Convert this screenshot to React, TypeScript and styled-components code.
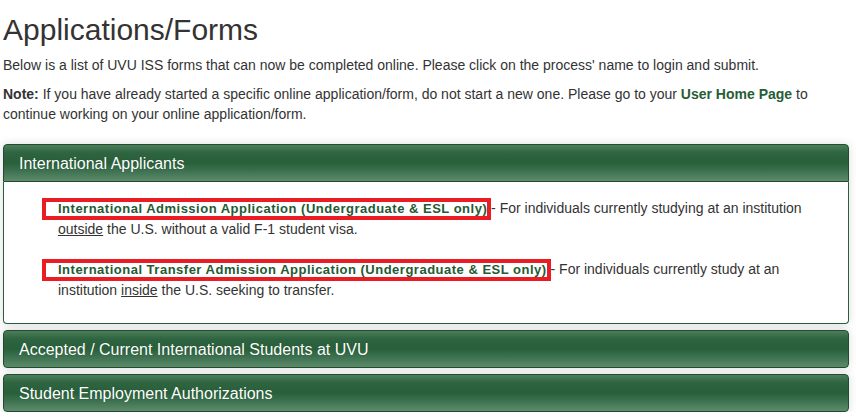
import styled, { createGlobalStyle } from "styled-components";

const GlobalStyle = createGlobalStyle`
  body {
    margin: 0;
    background: #fff;
    font-family: "Liberation Sans", Arial, sans-serif;
    color: #333;
  }
`;

const Page = styled.div`
  padding: 0 7px 0 3px;
`;

const Title = styled.h1`
  margin: 12px 0 0;
  font-size: 30px;
  font-weight: normal;
  line-height: 36px;
  color: #333;
`;

const Paragraph = styled.p`
  margin: 9px 0 0;
  font-size: 14px;
  line-height: 20px;

  &:first-of-type {
    margin-top: 7px;
  }
`;

const HomeLink = styled.a`
  color: #275d36;
  font-weight: bold;
  text-decoration: none;
`;

const Accordion = styled.div`
  margin-top: 20px;
  display: flex;
  flex-direction: column;
  gap: 6px;
`;

const Panel = styled.section`
  border-radius: 4px;
  box-shadow: 0 0 10px rgba(0, 0, 0, 0.14);
  background: #fff;
`;

const PanelHeader = styled.div<{ $open?: boolean }>`
  display: flex;
  align-items: center;
  padding: 2px 15px 0;
  box-sizing: border-box;
  height: 38px;
  border: 1px solid #1f4d2d;
  border-radius: ${(p) => (p.$open ? "4px 4px 0 0" : "4px")};
  background: linear-gradient(
    to bottom,
    #4d7d5b 0%,
    #2e6440 22%,
    #28603a 50%,
    #3d7150 72%,
    #5d8b6b 100%
  );
  color: #fff;
  font-size: 16px;
  text-shadow: 0 0 1px rgba(0, 0, 0, 0.3);
`;

const PanelBody = styled.div`
  border: 1px solid #2b5f3b;
  border-top: none;
  border-radius: 0 0 4px 4px;
  padding: 16px 15px 23px 15px;
`;

const FormList = styled.ul`
  list-style: none;
  margin: 0;
  padding: 0 0 0 39px;
`;

const FormItem = styled.li`
  font-size: 14px;
  line-height: 20px;
  & + & {
    margin-top: 20px;
  }
`;

const FormLink = styled.a`
  position: relative;
  color: #245a33;
  font-weight: bold;
  font-size: 13px;
  letter-spacing: 0.5px;
  text-decoration: none;

  &::before {
    content: "";
    position: absolute;
    left: -16px;
    right: -4px;
    top: -3px;
    bottom: -4px;
    border: 4px solid #ea1c24;
    pointer-events: none;
  }
`;

const Underlined = styled.span`
  text-decoration: underline;
`;

const forms = [
  {
    name: "International Admission Application (Undergraduate & ESL only)",
    before: " - For individuals currently studying at an institution ",
    emphasis: "outside",
    after: " the U.S. without a valid F-1 student visa.",
  },
  {
    name: "International Transfer Admission Application (Undergraduate & ESL only)",
    before: " - For individuals currently study at an institution ",
    emphasis: "inside",
    after: " the U.S. seeking to transfer.",
  },
];

const App = () => {
  return (
    <Page>
      <GlobalStyle />
      <Title>Applications/Forms</Title>
      <Paragraph>
        Below is a list of UVU ISS forms that can now be completed online.
        Please click on the process' name to login and submit.
      </Paragraph>
      <Paragraph>
        <b>Note:</b> If you have already started a specific online
        application/form, do not start a new one. Please go to your{" "}
        <HomeLink href="#">User Home Page</HomeLink> to continue working on
        your online application/form.
      </Paragraph>

      <Accordion>
        <Panel>
          <PanelHeader $open>International Applicants</PanelHeader>
          <PanelBody>
            <FormList>
              {forms.map((f) => (
                <FormItem key={f.name}>
                  <FormLink href="#">{f.name}</FormLink>
                  {f.before}
                  <Underlined>{f.emphasis}</Underlined>
                  {f.after}
                </FormItem>
              ))}
            </FormList>
          </PanelBody>
        </Panel>
        <Panel>
          <PanelHeader>Accepted / Current International Students at UVU</PanelHeader>
        </Panel>
        <Panel>
          <PanelHeader>Student Employment Authorizations</PanelHeader>
        </Panel>
      </Accordion>
    </Page>
  );
};

export default App;
